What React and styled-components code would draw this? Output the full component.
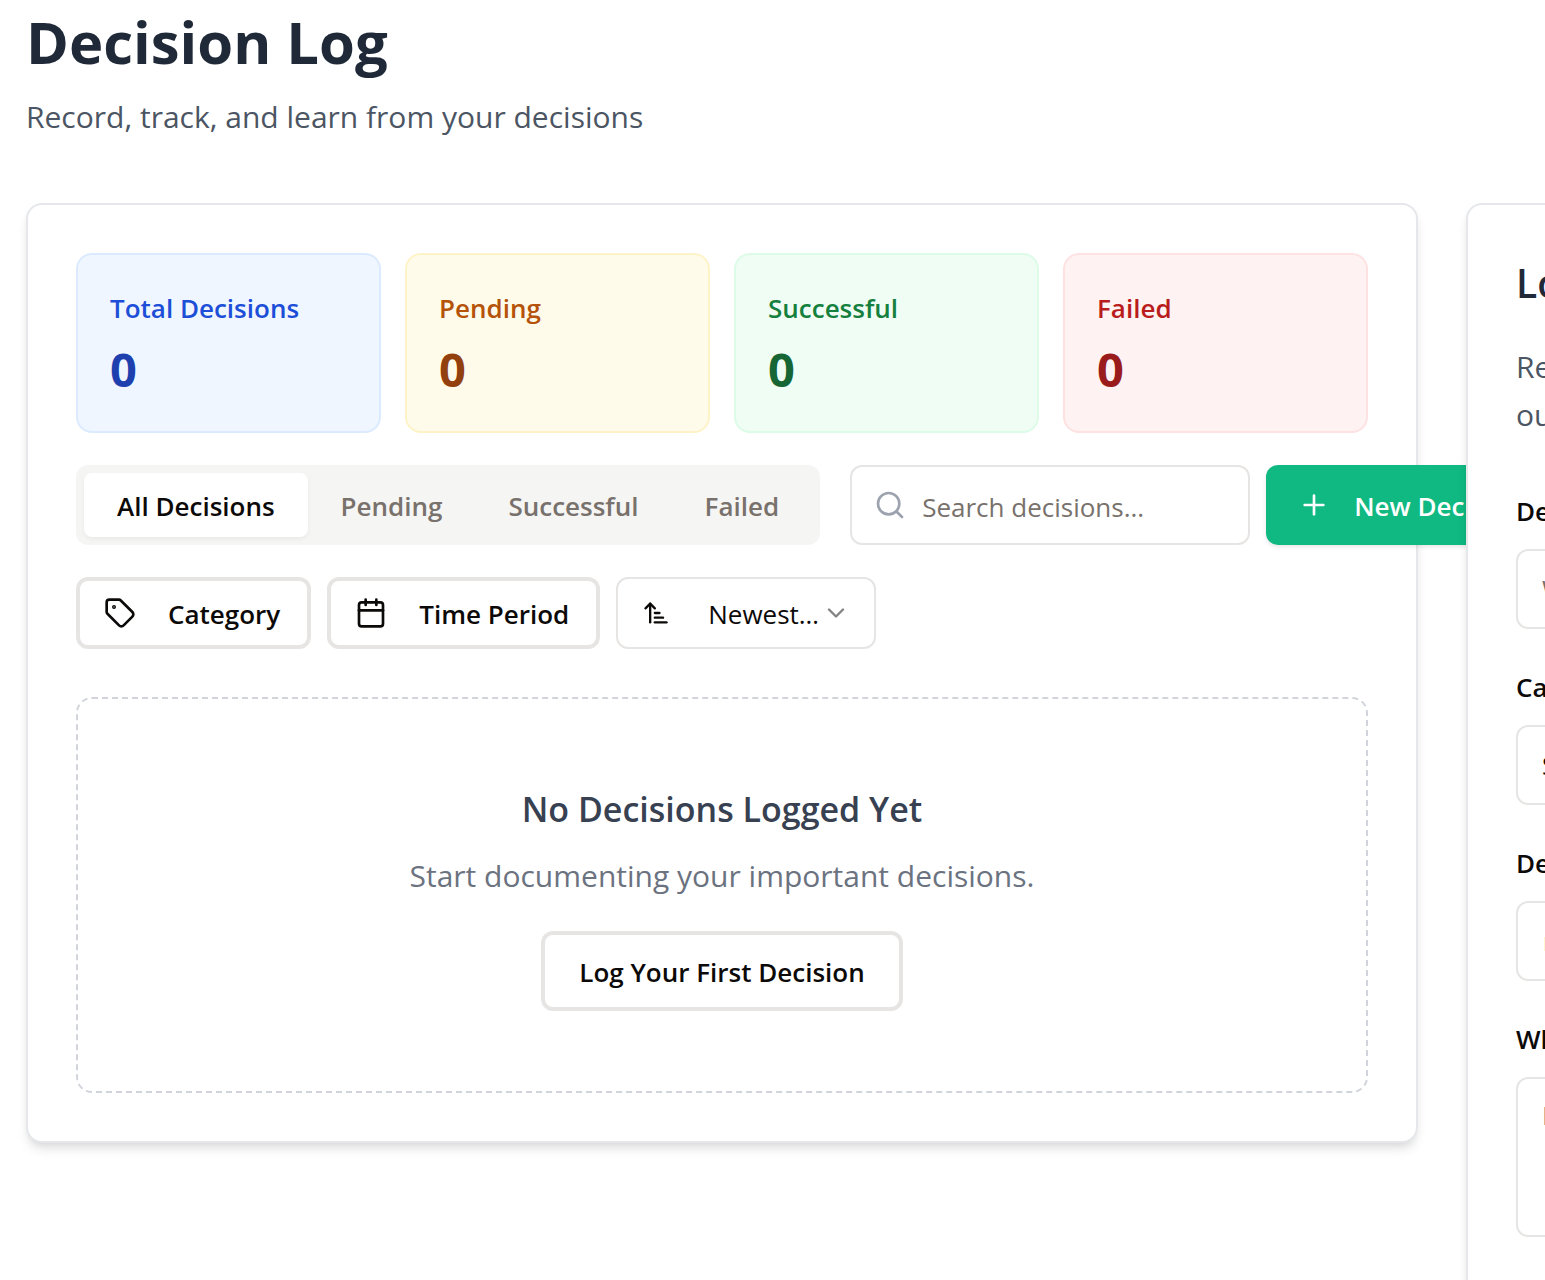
import React from 'react';
import styled, { createGlobalStyle, css } from 'styled-components';
import { Tag, Calendar, Search, Plus, ArrowUpNarrowWide, ChevronDown } from 'lucide-react';

const GlobalStyle = createGlobalStyle`
  *, *::before, *::after { box-sizing: border-box; }
  body {
    margin: 0;
    background: #ffffff;
    color: #0c0a09;
    font-family: "Open Sans", "Noto Sans", sans-serif;
    font-size: 30px;
    line-height: 48px;
  }
  h1, h2, h3, p { margin: 0; }
  button, input, select, textarea { font: inherit; color: inherit; margin: 0; }
`;

const Page = styled.div`
  padding: 6px 0 64px 26px;
  overflow-x: clip;
`;

const Header = styled.header`
  display: flex;
  flex-direction: column;
  gap: 15px;
  margin-bottom: 62px;
`;

const Title = styled.h1`
  font-size: 58px;
  line-height: 72px;
  font-weight: 700;
  color: #1f2937;
`;

const Subtitle = styled.p`
  color: #4b5563;
`;

const Layout = styled.div`
  display: grid;
  grid-template-columns: calc(100% - 127px) 672px;
  gap: 48px;
  align-items: start;
`;

const cardStyles = css`
  padding: 48px;
  background: #ffffff;
  border: 2px solid #e5e7eb;
  border-radius: 16px;
  box-shadow: 0 8px 12px -2px rgba(0, 0, 0, 0.1), 0 4px 8px -4px rgba(0, 0, 0, 0.1);
`;

const MainCard = styled.main`
  ${cardStyles}
  display: flex;
  flex-direction: column;
  gap: 32px;
`;

const SideCard = styled.aside`
  ${cardStyles}
`;

const Stats = styled.div`
  display: grid;
  grid-template-columns: repeat(4, 1fr);
  gap: 24px;
`;

const Stat = styled.div`
  display: flex;
  flex-direction: column;
  gap: 9px;
  padding: 33px 32px 30px;
  border: 2px solid ${(p) => p.$tone.border};
  border-radius: 16px;
  background: ${(p) => p.$tone.background};
`;

const StatLabel = styled.h3`
  font-size: 26px;
  line-height: 40px;
  font-weight: 600;
  color: ${(p) => p.$color};
`;

const StatValue = styled.p`
  font-size: 47px;
  line-height: 64px;
  font-weight: 700;
  color: ${(p) => p.$color};
`;

const Toolbar = styled.div`
  display: flex;
  align-items: center;
  gap: 16px;
`;

const TabList = styled.div`
  display: flex;
  flex: none;
  margin-right: 14px;
  padding: 8px;
  border-radius: 12px;
  background: #f5f5f4;
`;

const Tab = styled.button`
  height: 64px;
  padding: 2px 33px 0;
  border: 0;
  border-radius: 8px;
  background: ${(p) => (p.$active ? '#ffffff' : 'transparent')};
  box-shadow: ${(p) => (p.$active ? '0 2px 4px rgba(0, 0, 0, 0.05)' : 'none')};
  color: ${(p) => (p.$active ? '#0c0a09' : '#78716c')};
  font-size: 26px;
  line-height: 40px;
  font-weight: 600;
  white-space: nowrap;
`;

const SearchBox = styled.label`
  display: flex;
  flex: none;
  align-items: center;
  gap: 16px;
  width: 400px;
  height: 80px;
  padding: 0 22px;
  border: 2px solid #e7e5e4;
  border-radius: 12px;
  color: #9ca3af;
`;

const SearchInput = styled.input`
  flex: 1;
  min-width: 0;
  padding: 4px 0 0;
  border: 0;
  outline: 0;
  background: transparent;
  font-size: 26px;
  line-height: 40px;
  color: #0c0a09;
  &::placeholder { color: #78716c; opacity: 1; }
`;

const Button = styled.button`
  display: inline-flex;
  flex: none;
  align-items: center;
  justify-content: center;
  gap: 24px;
  height: 80px;
  padding: 0 ${(p) => (p.$primary ? '32px' : '34px')};
  border-radius: 12px;
  border: ${(p) => (p.$primary ? '0' : '4px solid #e7e5e4')};
  background: ${(p) => (p.$primary ? '#10b981' : '#ffffff')};
  box-shadow: ${(p) => (p.$primary ? '0 2px 4px rgba(0, 0, 0, 0.1)' : 'none')};
  color: ${(p) => (p.$primary ? '#ffffff' : '#0c0a09')};
  font-size: 26px;
  line-height: 40px;
  font-weight: 600;
  white-space: nowrap;
`;

const ButtonText = styled.span`
  padding-top: 2px;
`;

const FilterButton = styled(Button)`
  gap: 32px;
  height: 72px;
  padding: 0 27px 0 24px;
`;

const SortBox = styled.label`
  display: flex;
  align-items: center;
  width: 260px;
  height: 72px;
  padding: 0 24px;
  border: 2px solid #e7e5e4;
  border-radius: 12px;
  svg { flex: none; }
  svg:last-child { opacity: 0.5; }
`;

const SortSelect = styled.select`
  flex: 1;
  min-width: 0;
  margin-left: 38px;
  padding: 2px 0 0;
  border: 0;
  outline: 0;
  appearance: none;
  background: transparent;
  font-size: 26px;
  line-height: 40px;
  overflow: hidden;
  text-overflow: ellipsis;
  white-space: nowrap;
`;

const Empty = styled.section`
  display: flex;
  flex-direction: column;
  align-items: center;
  margin-top: 16px;
  padding: 82px 48px 80px;
  border: 2px dashed #d1d5db;
  border-radius: 16px;
`;

const EmptyTitle = styled.h2`
  font-size: 34px;
  line-height: 56px;
  font-weight: 600;
  color: #374151;
`;

const EmptyText = styled.p`
  margin: 15px 0 31px;
  color: #6b7280;
`;

const SideTitle = styled.h2`
  font-size: 39px;
  line-height: 60px;
  font-weight: 600;
  color: #1f2937;
`;

const SideText = styled.p`
  margin: 30px 0 52px;
  color: #4b5563;
`;

const Form = styled.form`
  display: flex;
  flex-direction: column;
  gap: 38px;
`;

const Field = styled.label`
  display: flex;
  flex-direction: column;
  gap: 18px;
  font-size: 26px;
  line-height: 40px;
  font-weight: 600;
`;

const fieldStyles = css`
  width: 100%;
  height: 80px;
  padding: 0 24px;
  border: 2px solid #e7e5e4;
  border-radius: 12px;
  background: #ffffff;
  font-weight: 400;
  &::placeholder { color: #78716c; opacity: 1; }
`;

const TextInput = styled.input`${fieldStyles}`;

const SelectInput = styled.select`
  ${fieldStyles}
  appearance: none;
`;

const TextArea = styled.textarea`
  ${fieldStyles}
  height: 160px;
  padding: 16px 24px;
  resize: none;
`;

const stats = [
  { label: 'Total Decisions', tone: { background: '#eff6ff', border: '#dbeafe' }, text: '#1d4ed8', value: '#1e40af' },
  { label: 'Pending', tone: { background: '#fffbeb', border: '#fef3c7' }, text: '#b45309', value: '#92400e' },
  { label: 'Successful', tone: { background: '#f0fdf4', border: '#dcfce7' }, text: '#15803d', value: '#166534' },
  { label: 'Failed', tone: { background: '#fef2f2', border: '#fee2e2' }, text: '#b91c1c', value: '#991b1b' },
];

const tabs = ['All Decisions', 'Pending', 'Successful', 'Failed'];

export default function App() {
  const [active, setActive] = React.useState(tabs[0]);

  return (
    <Page>
      <GlobalStyle />
      <Header>
        <Title>Decision Log</Title>
        <Subtitle>Record, track, and learn from your decisions</Subtitle>
      </Header>
      <Layout>
        <MainCard>
          <Stats>
            {stats.map((s) => (
              <Stat key={s.label} $tone={s.tone}>
                <StatLabel $color={s.text}>{s.label}</StatLabel>
                <StatValue $color={s.value}>0</StatValue>
              </Stat>
            ))}
          </Stats>
          <Toolbar>
            <TabList role="tablist">
              {tabs.map((t) => (
                <Tab
                  key={t}
                  type="button"
                  role="tab"
                  aria-selected={t === active}
                  $active={t === active}
                  onClick={() => setActive(t)}
                >
                  {t}
                </Tab>
              ))}
            </TabList>
            <SearchBox>
              <Search size={32} aria-hidden="true" />
              <SearchInput type="text" aria-label="Search decisions" placeholder="Search decisions..." />
            </SearchBox>
            <Button type="button" $primary>
              <Plus size={32} aria-hidden="true" />
              <ButtonText>New Decision</ButtonText>
            </Button>
          </Toolbar>
          <Toolbar>
            <FilterButton type="button">
              <Tag size={32} aria-hidden="true" />
              <ButtonText>Category</ButtonText>
            </FilterButton>
            <FilterButton type="button">
              <Calendar size={32} aria-hidden="true" />
              <ButtonText>Time Period</ButtonText>
            </FilterButton>
            <SortBox>
              <ArrowUpNarrowWide size={28} aria-hidden="true" />
              <SortSelect aria-label="Sort order" defaultValue="newest">
                <option value="newest">Newest First</option>
                <option value="oldest">Oldest First</option>
              </SortSelect>
              <ChevronDown size={28} aria-hidden="true" />
            </SortBox>
          </Toolbar>
          <Empty>
            <EmptyTitle>No Decisions Logged Yet</EmptyTitle>
            <EmptyText>Start documenting your important decisions.</EmptyText>
            <Button type="button">
              <ButtonText>Log Your First Decision</ButtonText>
            </Button>
          </Empty>
        </MainCard>
        <SideCard>
          <SideTitle>Log Decision</SideTitle>
          <SideText>Record your decision now and track the outcomes later</SideText>
          <Form>
            <Field>
              Decision Title
              <TextInput type="text" placeholder="What did you decide?" />
            </Field>
            <Field>
              Category
              <SelectInput defaultValue="">
                <option value="">Select category</option>
              </SelectInput>
            </Field>
            <Field>
              Decision Date
              <TextInput type="date" />
            </Field>
            <Field>
              Why did you make this decision?
              <TextArea placeholder="Explain your reasoning" />
            </Field>
            <Field>
              Expected Outcome
              <TextArea placeholder="What do you expect to happen?" />
            </Field>
            <Button type="submit" $primary>
              <ButtonText>Log Decision</ButtonText>
            </Button>
          </Form>
        </SideCard>
      </Layout>
    </Page>
  );
}
